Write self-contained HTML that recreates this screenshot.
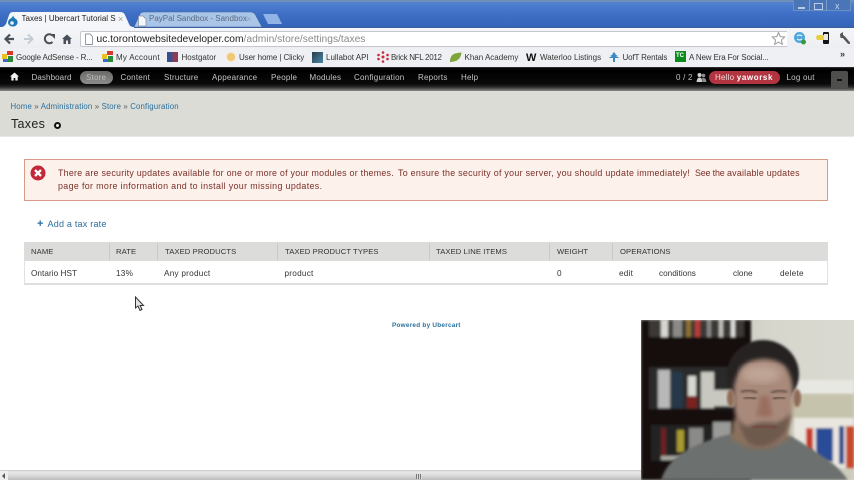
<!DOCTYPE html>
<html><head><meta charset="utf-8">
<style>
html,body{margin:0;padding:0;width:854px;height:480px;overflow:hidden;background:#fff;font-family:"Liberation Sans",sans-serif}
.a{position:absolute;white-space:nowrap}
.b{position:absolute}
.n{position:absolute;white-space:nowrap;font-size:8px;line-height:12px;color:#c4c4c4;top:72px;letter-spacing:.22px}
.k{position:absolute;white-space:nowrap;font-size:8px;line-height:12px;color:#333;top:52px}
.l{color:#2a6f9e}
.h{position:absolute;white-space:nowrap;font-size:7.65px;line-height:12px;color:#333;top:246px;letter-spacing:.1px}
.r{position:absolute;white-space:nowrap;font-size:8.2px;line-height:12px;color:#333;top:268px;letter-spacing:.25px}
.e{position:absolute;white-space:nowrap;font-size:8.9px;line-height:13px;color:#7a3028;letter-spacing:.34px}
.s{position:absolute;top:243px;width:1px;height:17px;background:#c8c8c6}
</style></head><body>

<!-- window chrome -->
<div class="b" style="left:0;top:0;width:854px;height:28px;background:linear-gradient(#5a85c8 0,#4f7fd0 4px,#3f6fc6 14px,#3565b8 27px)"></div>
<div class="b" style="left:0;top:0;width:854px;height:2px;background:#6f8fb8"></div>
<!-- window buttons -->
<div class="b" style="left:793px;top:0;width:58px;height:11px;background:#4a76b8;border:1px solid #6a8fc4;border-top:0;box-sizing:border-box"></div>
<div class="b" style="left:809px;top:0;width:1px;height:11px;background:#7a9ccc"></div>
<div class="b" style="left:826px;top:0;width:1px;height:11px;background:#7a9ccc"></div>
<div class="b" style="left:798px;top:7px;width:7px;height:2px;background:#b8cce6"></div>
<div class="b" style="left:814px;top:3px;width:7px;height:5px;border:1px solid #b8cce6;box-sizing:content-box"></div>
<div class="a" style="left:835px;top:1px;font-size:9px;line-height:10px;color:#c4d4ea">x</div>

<!-- tabs -->
<svg class="b" style="left:0;top:0" width="300" height="28">
<path d="M134 27L140 14Q141 12 144 12H250Q253 12 255 14L262 27Z" fill="#a9c6e9" stroke="#3d68a8" stroke-width=".6"/>
<path d="M263 14H277L282 24H268Z" fill="#90b4e6"/>
<path d="M0 27H2Q6 26 7 21L9 15Q10 12 13 12H120Q124 12 125 15L129 24Q130 27 134 27V28H0Z" fill="#f4f6f9"/>
</svg>
<svg class="b" style="left:7px;top:15px" width="12" height="12" viewBox="0 0 12 12">
<path d="M6 0.5Q7 3 9.5 4.5C11 6 11 9 9 10.5C7 12 3.500 11.800 2 10C0 7.500 1.500 4.500 3.500 3.500Q5.500 2.500 6 .5Z" fill="#1d7ab8"/>
<circle cx="5" cy="8" r="1.800" fill="#e8f2f8"/>
</svg>
<div class="a" style="left:21.500px;top:13px;font-size:8px;line-height:12px;color:#222;width:94px;overflow:hidden">Taxes | Ubercart Tutorial Se</div>
<div class="a" style="left:118px;top:13px;font-size:9px;line-height:12px;color:#999">×</div>
<svg class="b" style="left:137px;top:15px" width="10" height="12"><path d="M1.500 1H6L9 4V11H1.500Z" fill="#f5f7fa" stroke="#8a94a4" stroke-width=".8"/></svg>
<div class="a" style="left:149px;top:13px;font-size:8px;line-height:12px;color:#5a6a80">PayPal Sandbox - Sandbox</div>
<div class="a" style="left:246px;top:13px;font-size:9px;line-height:12px;color:#8aa2c0">×</div>

<!-- toolbar -->
<div class="b" style="left:0;top:27px;width:854px;height:21px;background:linear-gradient(#f4f6f9,#eceef1)"></div>
<div class="b" style="left:134px;top:27px;width:720px;height:1px;background:#3a5f9c"></div>
<svg class="b" style="left:0;top:28px" width="80" height="21">
<path d="M14 11H6M10 6.500L5.500 11L10 15.500" fill="none" stroke="#4a5058" stroke-width="2.200"/>
<path d="M24 11H32M28 6.500L32.500 11L28 15.500" fill="none" stroke="#c6ccd4" stroke-width="2"/>
<path d="M52.500 7.500A4.500 4.500 0 1 0 52.500 14" fill="none" stroke="#4a5058" stroke-width="2"/>
<path d="M50 6H55V11Z" fill="#4a5058"/>
<path d="M62 11L67 6.500L72 11H70.500V16H68V12.500H66V16H63.500V11Z" fill="#4a5058"/>
</svg>
<div class="b" style="left:80px;top:31px;width:707px;height:16px;background:#fff;border:1px solid #c4c8ce;border-right:0;box-sizing:border-box;border-radius:2px 0 0 2px"></div>
<svg class="b" style="left:84px;top:33px" width="10" height="13"><path d="M1.500 1H6L8.500 3.500V11.500H1.500Z" fill="#fff" stroke="#8e949c" stroke-width=".9"/></svg>
<div class="a" style="left:96.500px;top:33px;font-size:10.250px;line-height:14px;color:#222">uc.torontowebsitedeveloper.com<span style="color:#8a8a8a">/admin/store/settings/taxes</span></div>
<svg class="b" style="left:771px;top:31px" width="15" height="15" viewBox="0 0 15 15"><path d="M7.500 1.500L9.300 5.600L13.700 6L10.400 9L11.400 13.400L7.500 11.100L3.600 13.400L4.600 9L1.300 6L5.700 5.600Z" fill="#fff" stroke="#9a9a9a" stroke-width="1"/></svg>
<!-- ext icons -->
<svg class="b" style="left:793px;top:31px" width="14" height="15"><circle cx="6.500" cy="6.500" r="5.500" fill="#4ea6dc"/><path d="M4 5Q6.500 3 9 5M4 8Q6.500 10 9 8" stroke="#e4f2fa" stroke-width="1.300" fill="none"/><circle cx="10.500" cy="11" r="2.500" fill="#3a9a3a"/></svg>
<svg class="b" style="left:816px;top:31px" width="14" height="15"><rect x="7" y="1" width="6" height="12" rx="1" fill="#151515"/><rect x="8" y="3" width="4" height="6" fill="#e8e8e8"/><path d="M1 4H8V9H1L0 6.500Z" fill="#e8d040"/></svg>
<svg class="b" style="left:838px;top:31px" width="14" height="15"><path d="M2 3L5 1L5 4L7 5.500L12 11.500Q12.500 13 11 13L9.800 12.600L4.800 7L2.500 7Z" fill="#555"/></svg>

<!-- bookmarks -->
<div class="b" style="left:0;top:48px;width:854px;height:19px;background:#eef0f3"></div>
<svg class="b" style="left:2px;top:51px" width="12" height="12"><rect x="5" y="0" width="6" height="4" fill="#d93a2a"/><rect x="0" y="3" width="5" height="5" fill="#e8c020"/><rect x="6" y="5" width="5" height="6" fill="#2a8a3a"/><rect x="1" y="8" width="5" height="3" fill="#3a6ac8"/></svg>
<div class="k" style="left:16px;letter-spacing:-.15px">Google AdSense - R...</div>
<svg class="b" style="left:102px;top:51px" width="12" height="12"><rect x="5" y="0" width="6" height="4" fill="#d93a2a"/><rect x="0" y="3" width="5" height="5" fill="#e8c020"/><rect x="6" y="5" width="5" height="6" fill="#2a8a3a"/><rect x="1" y="8" width="5" height="3" fill="#3a6ac8"/></svg>
<div class="k" style="left:116px;letter-spacing:.25px">My Account</div>
<div class="b" style="left:167px;top:52px;width:11px;height:10px;background:linear-gradient(90deg,#35508c 50%,#8e3a54 50%)"></div>
<div class="k" style="left:181.500px">Hostgator</div>
<div class="b" style="left:226px;top:52px;width:10px;height:10px;border-radius:50%;background:#f0c878;border:1px solid #f8e8c0;box-sizing:border-box"></div>
<div class="k" style="left:239px;letter-spacing:-.1px">User home | Clicky</div>
<div class="b" style="left:312px;top:52px;width:11px;height:11px;background:linear-gradient(135deg,#2a3a4a,#4a88a8)"></div>
<div class="k" style="left:326px">Lullabot API</div>
<svg class="b" style="left:377px;top:51px" width="12" height="12"><g fill="#c82a3a"><circle cx="6" cy="1.500" r="1.300"/><circle cx="6" cy="10.500" r="1.300"/><circle cx="1.500" cy="4" r="1.300"/><circle cx="10.500" cy="4" r="1.300"/><circle cx="1.500" cy="8" r="1.300"/><circle cx="10.500" cy="8" r="1.300"/><circle cx="6" cy="6" r="1.500"/></g></svg>
<div class="k" style="left:391px;letter-spacing:-.3px">Brick NFL 2012</div>
<svg class="b" style="left:449px;top:51px" width="13" height="12"><path d="M1 11Q1 4 6 2.500Q10 1.500 12.500 1.500Q12 7 8 9.500Q4 11 1 11Z" fill="#7ea43a"/></svg>
<div class="k" style="left:464.500px">Khan Academy</div>
<div class="a" style="left:526px;top:51px;font-size:11px;line-height:14px;font-weight:bold;color:#111">W</div>
<div class="k" style="left:540px">Waterloo Listings</div>
<svg class="b" style="left:608px;top:51px" width="12" height="12"><path d="M6 1L8 3.500H7L10 5H8L11.500 7H7V11H5V7H.5L4 5H2L5 3.500H4Z" fill="#3a88c4"/></svg>
<div class="k" style="left:622.500px;letter-spacing:-.15px">UofT Rentals</div>
<div class="b" style="left:675px;top:51px;width:11px;height:11px;background:#0c8a1c"></div>
<div class="a" style="left:676px;top:53px;font-size:6px;line-height:7px;font-weight:bold;color:#fff">TC</div>
<div class="k" style="left:689px;letter-spacing:-.14px">A New Era For Social...</div>
<div class="a" style="left:840px;top:48px;font-size:9px;line-height:12px;font-weight:bold;color:#333">»</div>

<!-- admin toolbar -->
<div class="b" style="left:0;top:67px;width:854px;height:24px;background:linear-gradient(#0d0d0d 0,#000 4px,#0a0a0a 17px,#2a2a2a 20px,#8a8a88 24px)"></div>
<div class="b" style="left:0;top:67px;width:854px;height:1px;background:#2a2a2a"></div>
<svg class="b" style="left:10px;top:72px" width="9" height="9"><path d="M4.500 .5L9 4.500H7.700V8.500H5.300V6H3.700V8.500H1.300V4.500H0Z" fill="#f0f0f0"/></svg>
<div class="n" style="left:31.500px;letter-spacing:.1px">Dashboard</div>
<div class="b" style="left:80px;top:71px;width:33px;height:13px;border-radius:7px;background:linear-gradient(#6a6a68,#8c8c8a)"></div>
<div class="n" style="left:86px;color:#bdbdbb">Store</div>
<div class="n" style="left:120.500px">Content</div>
<div class="n" style="left:164px">Structure</div>
<div class="n" style="left:212px">Appearance</div>
<div class="n" style="left:271px">People</div>
<div class="n" style="left:309.500px">Modules</div>
<div class="n" style="left:354px">Configuration</div>
<div class="n" style="left:418px">Reports</div>
<div class="n" style="left:461px">Help</div>
<div class="n" style="left:676px">0 / 2</div>
<svg class="b" style="left:696px;top:72px" width="11" height="11"><circle cx="3.500" cy="3" r="2" fill="#cfcfcf"/><path d="M.5 10Q1 5.500 3.500 5.500Q6 5.500 6.500 10Z" fill="#cfcfcf"/><circle cx="7.500" cy="3.500" r="1.800" fill="#8f8f8f"/><path d="M6 6Q10 5 10.500 10H7Z" fill="#8f8f8f"/></svg>
<div class="b" style="left:709px;top:71px;width:71px;height:13px;border-radius:7px;background:#b23440"></div>
<div class="n" style="left:715px;color:#f0d8da">Hello <b style="color:#fff;letter-spacing:.6px">yaworsk</b></div>
<div class="n" style="left:786.500px">Log out</div>
<div class="b" style="left:831px;top:71px;width:17px;height:18px;background:#4e4e4c;border-radius:2px 2px 0 0"></div>
<div class="b" style="left:837px;top:79px;width:5px;height:2px;background:#111"></div>

<!-- header band -->
<div class="b" style="left:0;top:91px;width:854px;height:46px;background:#dcdcd6"></div>
<div class="b" style="left:0;top:136px;width:854px;height:1px;background:#e8e8e4"></div>
<div class="a l" style="left:10.500px;top:101px;font-size:7.800px;line-height:12px;letter-spacing:.165px">Home <span style="color:#555">»</span> Administration <span style="color:#555">»</span> Store <span style="color:#555">»</span> Configuration</div>
<div class="a" style="left:11px;top:116px;font-size:12.500px;line-height:16px;color:#222;letter-spacing:.3px">Taxes</div>
<div class="b" style="left:53.500px;top:122px;width:3px;height:3px;border:2px solid #111;border-radius:50%;background:#eee"></div>

<!-- error box -->
<div class="b" style="left:24px;top:159px;width:804px;height:42px;background:#fdf1ec;border:1px solid #d99a88;box-sizing:border-box"></div>
<svg class="b" style="left:30px;top:165px" width="16" height="16"><circle cx="8" cy="8" r="7.500" fill="#c22838"/><path d="M5 5L11 11M11 5L5 11" stroke="#fff" stroke-width="2.300"/></svg>
<div class="e" style="left:58px;top:167px;letter-spacing:.25px">There are security updates available for one or more of your modules or themes.</div>
<div class="e" style="left:398px;top:167px;letter-spacing:.28px">To ensure the security of your server, you should update immediately!</div>
<div class="e" style="left:695px;top:167px;letter-spacing:-.15px">See the</div>
<div class="e l" style="left:727px;top:167px;letter-spacing:.22px">available updates</div>
<div class="e" style="left:58px;top:180px;letter-spacing:.35px">page for more information and to install your missing updates.</div>

<!-- add link -->
<div class="a l" style="left:37px;top:218px;font-size:11px;line-height:13px;font-weight:bold">+</div>
<div class="a l" style="left:47.500px;top:218px;font-size:9px;line-height:13px;letter-spacing:.22px">Add a tax rate</div>

<!-- table -->
<div class="b" style="left:24px;top:242px;width:804px;height:19px;background:#dcdcda"></div>
<div class="b" style="left:24px;top:261px;width:804px;height:24px;background:#fff;border:1px solid #e2e2e0;border-top:0;border-bottom:2px solid #dedede;box-sizing:border-box"></div>
<div class="s" style="left:109px"></div><div class="s" style="left:157px"></div><div class="s" style="left:277px"></div><div class="s" style="left:429px"></div><div class="s" style="left:549px"></div><div class="s" style="left:612px"></div>
<div class="h" style="left:31px">NAME</div>
<div class="h" style="left:116px">RATE</div>
<div class="h" style="left:165px">TAXED PRODUCTS</div>
<div class="h" style="left:285px">TAXED PRODUCT TYPES</div>
<div class="h" style="left:436px">TAXED LINE ITEMS</div>
<div class="h" style="left:557px">WEIGHT</div>
<div class="h" style="left:620px">OPERATIONS</div>
<div class="r" style="left:31px;letter-spacing:.05px">Ontario HST</div>
<div class="r" style="left:116px">13%</div>
<div class="r" style="left:164px">Any product</div>
<div class="r" style="left:284.500px">product</div>
<div class="r" style="left:557px">0</div>
<div class="r l" style="left:619px">edit</div>
<div class="r l" style="left:659px;letter-spacing:0">conditions</div>
<div class="r l" style="left:733px;letter-spacing:0">clone</div>
<div class="r l" style="left:780px">delete</div>

<!-- cursor -->
<svg class="b" style="left:134px;top:296px" width="11" height="16"><path d="M1.500 1V12L4 10L6 14.500L8 13.500L6.200 9.500H9.500Z" fill="#e4e4e4" stroke="#333" stroke-width="1"/></svg>

<!-- powered by -->
<div class="a l" style="left:392px;top:321px;font-size:6.400px;line-height:10px;font-weight:bold;letter-spacing:.25px">Powered by Ubercart</div>

<!-- scrollbar -->
<div class="b" style="left:0;top:470px;width:641px;height:10px;background:linear-gradient(#c8c8c8 0,#e8e8e8 2px,#dedede 5px,#bcbcbc 10px)"></div>
<div class="b" style="left:0;top:471px;width:8px;height:9px;background:#eee"></div>
<div class="b" style="left:2px;top:473px;width:0;height:0;border:3px solid transparent;border-right:3px solid #555;border-left:0"></div>
<div class="b" style="left:416px;top:474px;width:6px;height:5px;background:repeating-linear-gradient(90deg,#777 0,#777 1px,#ddd 1px,#ddd 2px)"></div>

<!-- webcam -->
<svg class="b" style="left:641px;top:320px" width="213" height="160" viewBox="0 0 213 160">
<defs>
<filter id="f"><feGaussianBlur stdDeviation="1.300"/></filter>
<filter id="m"><feGaussianBlur stdDeviation="2.200"/></filter>
<filter id="g"><feGaussianBlur stdDeviation="4"/></filter>
<linearGradient id="w" x1="0" x2="1" y1="0" y2="0"><stop offset="0" stop-color="#b9b9b0"/><stop offset=".62" stop-color="#d6d6cd"/><stop offset="1" stop-color="#dadad2"/></linearGradient>
</defs>
<rect width="213" height="160" fill="url(#w)"/>
<rect x="100" y="60" width="113" height="14" fill="#e8e8e2" filter="url(#f)"/>
<rect x="100" y="74" width="113" height="26" fill="#c6c3ac" filter="url(#f)"/>
<rect x="100" y="98" width="113" height="62" fill="#cdccbc" filter="url(#f)"/>
<g filter="url(#f)">
<rect x="153" y="98" width="60" height="50" fill="#e8e6de"/>
<rect x="175" y="108" width="17" height="34" fill="#2c4c98"/>
<rect x="165" y="108" width="7" height="28" fill="#c83a28"/>
<rect x="198" y="106" width="5" height="38" fill="#2a4a90"/>
<rect x="205" y="106" width="8" height="42" fill="#c8482c"/>
<rect x="0" y="0" width="110" height="160" fill="#12100e"/>
<rect x="8" y="0" width="95" height="17" fill="#3a3835"/>
<rect x="20" y="0" width="7" height="17" fill="#d8d8d2"/>
<rect x="32" y="0" width="9" height="17" fill="#8a8a86"/>
<rect x="45" y="0" width="5" height="17" fill="#8a7030"/>
<rect x="54" y="0" width="5" height="17" fill="#b83a38"/>
<rect x="66" y="0" width="4" height="17" fill="#888"/>
<rect x="78" y="0" width="4" height="17" fill="#c0c0b8"/>
<rect x="90" y="0" width="4" height="17" fill="#ddd"/>
<rect x="8" y="47" width="85" height="42" fill="#2a2a2c"/>
<rect x="17" y="50" width="12" height="38" fill="#b8b8b8"/>
<rect x="30" y="52" width="12" height="36" fill="#283848"/>
<rect x="47" y="56" width="8" height="32" fill="#d8d8d2"/>
<rect x="46" y="76" width="10" height="12" fill="#7a2020"/>
<rect x="60" y="52" width="13" height="36" fill="#c8c8c0"/>
<rect x="73" y="70" width="20" height="16" fill="#c8c8c0"/>
<rect x="10" y="105" width="95" height="36" fill="#242424"/>
<rect x="20" y="108" width="5" height="28" fill="#6a2020"/>
<rect x="36" y="110" width="7" height="22" fill="#a89a30"/>
<rect x="48" y="108" width="14" height="26" fill="#8a8a88"/>
<rect x="72" y="102" width="18" height="28" fill="#9a9a98"/>
<rect x="20" y="136" width="50" height="4" fill="#a8a8a0"/>
</g>
<!-- shirt -->
<path d="M20 160Q26 140 50 128Q70 118 90 114L150 116Q170 128 190 142Q200 150 207 160Z" fill="#6c706e" filter="url(#f)"/>
<!-- neck -->
<path d="M92 100L90 118Q118 140 148 118L146 100Z" fill="#8a6f5c" filter="url(#m)"/>
<!-- hair -->
<ellipse cx="122" cy="54" rx="36" ry="34" fill="#262120" filter="url(#f)"/>
<!-- ears -->
<ellipse cx="90" cy="78" rx="4" ry="9" fill="#8e6a54" filter="url(#f)"/>
<ellipse cx="156" cy="78" rx="4" ry="9" fill="#8e6a54" filter="url(#f)"/>
<!-- face -->
<path d="M93 66Q97 46 110 41Q130 35 144 46Q152 56 152 74Q153 104 140 118Q122 132 106 122Q94 108 93 82Z" fill="#a8897a" filter="url(#m)"/>
<!-- forehead highlight -->
<ellipse cx="120" cy="54" rx="20" ry="9" fill="#bfa596" filter="url(#g)"/>
<!-- beard -->
<path d="M95 96Q101 106 108 106Q120 100 134 103Q144 101 150 92Q149 110 140 118Q122 134 106 123Q98 112 95 96Z" fill="#6e5a4e" filter="url(#m)"/>
<!-- brows + eyes -->
<path d="M100 72Q108 68 116 73M130 73Q138 69 146 72" stroke="#54443a" stroke-width="2" fill="none" filter="url(#f)"/>
<path d="M103 78Q109 76 115 79M132 79Q138 76 144 78" stroke="#4c3e36" stroke-width="2.200" fill="none" filter="url(#f)"/>
<!-- nose / mouth -->
<path d="M119 76Q118 90 115 95Q124 99 132 95Q129 88 128 76Z" fill="#9a6e5e" filter="url(#m)"/>
<path d="M112 108Q124 104 136 108" stroke="#74463c" stroke-width="3" fill="none" filter="url(#f)"/>
</svg>
</body></html>
